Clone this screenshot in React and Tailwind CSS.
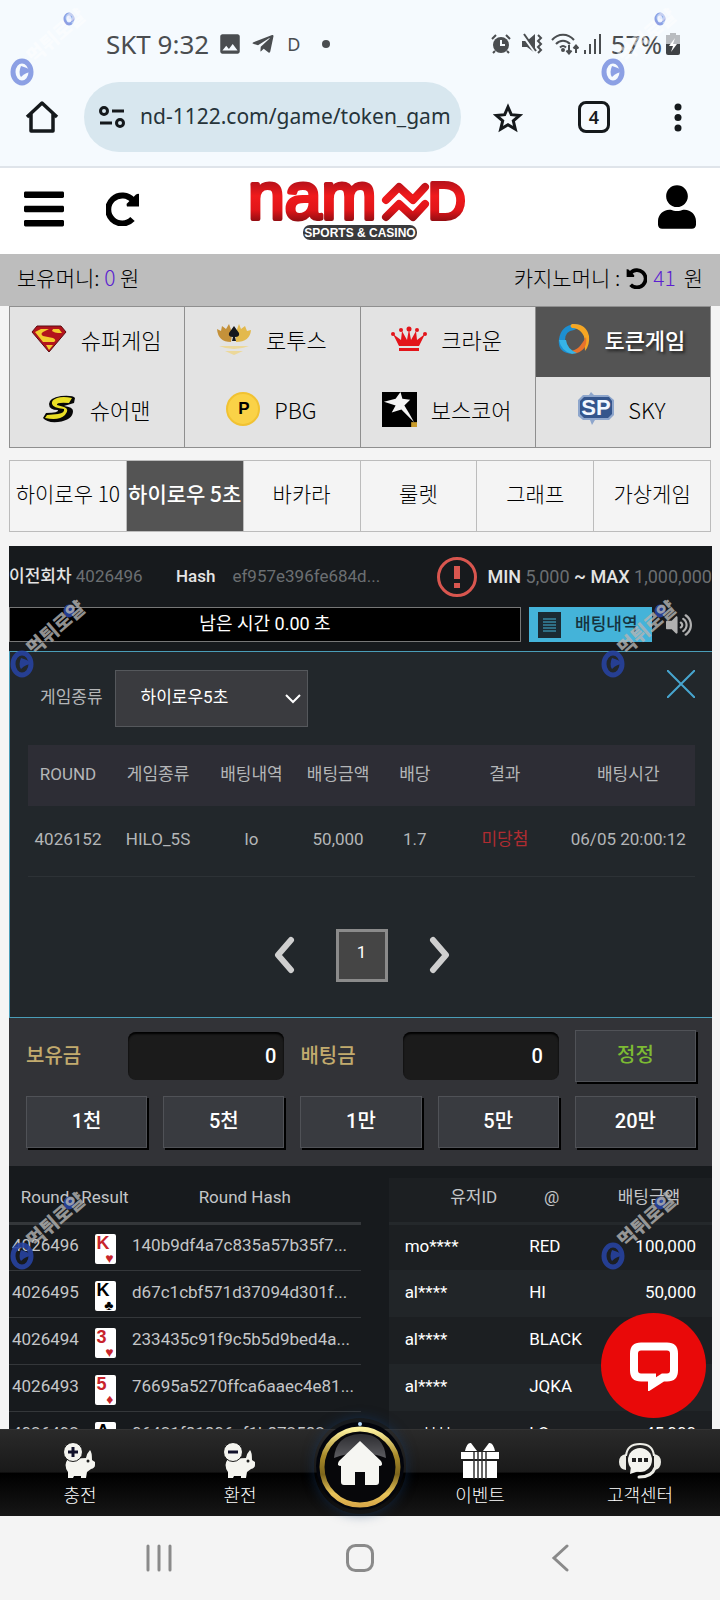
import { useState } from "react";
import { FaBars, FaUser, FaTelegramPlane, FaVolumeUp } from "react-icons/fa";
import { MdImage } from "react-icons/md";

const games = [
  { name: "슈퍼게임", icon: "super" },
  { name: "로투스", icon: "lotus" },
  { name: "크라운", icon: "crown" },
  { name: "토큰게임", icon: "token" },
  { name: "슈어맨", icon: "sureman" },
  { name: "PBG", icon: "pbg" },
  { name: "보스코어", icon: "star" },
  { name: "SKY", icon: "sky" },
];

const tabs = ["하이로우 10", "하이로우 5초", "바카라", "룰렛", "그래프", "가상게임"];

const chips = ["1천", "5천", "1만", "5만", "20만"];

const rounds = [
  { id: "4026496", rank: "K", suit: "♥", hash: "140b9df4a7c835a57b35f7..." },
  { id: "4026495", rank: "K", suit: "♣", hash: "d67c1cbf571d37094d301f..." },
  { id: "4026494", rank: "3", suit: "♥", hash: "233435c91f9c5b5d9bed4a..." },
  { id: "4026493", rank: "5", suit: "♦", hash: "76695a5270ffca6aaec4e81..." },
  { id: "4026492", rank: "A", suit: "♠", hash: "06421f81806ef1b872582..." },
];

const bets = [
  { user: "mo****", pick: "RED", amount: "100,000" },
  { user: "al****", pick: "HI", amount: "50,000" },
  { user: "al****", pick: "BLACK", amount: "" },
  { user: "al****", pick: "JQKA", amount: "" },
  { user: "su****", pick: "LO", amount: "45,000" },
];

const StatusBar = () => {
  return (
    <div className="flex h-[76px] items-center justify-between pl-[106px] pr-10 pt-3 font-['Noto_Sans',sans-serif] text-[26px] text-[#4a4d50]">
      <div className="flex items-center">
        <span>SKT 9:32</span>
        <MdImage className="ml-2 h-[26px] w-[26px]" />
        <FaTelegramPlane className="ml-2 h-6 w-6" />
        <span className="ml-3 text-lg">D</span>
        <span className="ml-[22px] h-2 w-2 rounded-full bg-[#4a4d50]" />
      </div>
      <div className="flex items-center">
        <svg viewBox="0 0 20 20" className="h-5 w-5">
          <circle cx="10" cy="11" r="8" fill="currentColor" />
          <path d="M1 5l4-4M19 5l-4-4M4 17l-2 2M16 17l2 2" stroke="currentColor" strokeWidth="2" />
          <path d="M10 6v5h4" fill="none" stroke="#f5fafe" strokeWidth="2" />
        </svg>
        <svg viewBox="0 0 22 22" className="ml-[10px] h-[22px] w-[22px]">
          <path d="M1 8h5l8-7v19l-8-6H1z" fill="currentColor" />
          <path d="M1 1l14 19" stroke="#f5fafe" strokeWidth="3" />
          <path d="M3 1l12 17M17 2l3 3-3 3 3 3-3 3 3 3-3 3" fill="none" stroke="currentColor" strokeWidth="2" />
        </svg>
        <svg viewBox="0 0 28 22" className="ml-2 h-[22px] w-7" fill="none" stroke="currentColor" strokeWidth="2">
          <path d="M1 7c6-7 16-7 22 0M5 11c4-4.500 10-4.500 14 0M9 14.500c2-2 4-2 6 0" />
          <circle cx="12" cy="17" r="1" />
          <path d="M18 12v8M15.500 17.500l2.500 3 2.500-3M25 20v-7M22.500 15.500l2.500-3 2.500 3" />
        </svg>
        <svg viewBox="0 0 20 22" className="ml-1 h-[22px] w-5" fill="currentColor">
          <path d="M1 17h2v4H1zM6 11h2v10H6zM11 6h2v15h-2zM16 1h2v20h-2z" />
        </svg>
        <span className="ml-2">57%</span>
        <svg viewBox="0 0 14 22" className="ml-1 h-[22px] w-[14px]">
          <path d="M4 0h6v2h4v9H0V2h4z" fill="#b9bcc0" />
          <path d="M0 11h14v9q0 2-2 2H2q-2 0-2-2z" fill="#3f4245" />
          <path d="M9 5l-6 8h4l-2 6 6-8H7z" fill="#fff" />
        </svg>
      </div>
    </div>
  );
};

const UrlBar = () => {
  return (
    <div className="flex h-[92px] items-start border-b-2 border-[#dfe4ea] pl-6 pr-[26px] pt-[6px] text-[#15191c]">
      <button type="button" aria-label="home" className="mt-[17px] h-9 w-9">
        <svg viewBox="0 0 36 36" fill="none" stroke="currentColor" strokeWidth="3.500" strokeLinejoin="round">
          <path d="M3 18L18 4l15 14M7 15v17h22V15" />
        </svg>
      </button>
      <div className="ml-6 flex h-[70px] min-w-0 flex-1 items-center rounded-full bg-[#d8e7ef] pl-[15px] pr-1">
        <svg viewBox="0 0 26 22" className="h-[22px] w-[26px] shrink-0" fill="none" stroke="currentColor" strokeWidth="3">
          <circle cx="5" cy="5" r="3.500" />
          <circle cx="21" cy="17" r="3.500" />
          <path d="M13 5h12M1 17h12" />
        </svg>
        <input
          aria-label="address"
          type="text"
          readOnly
          value="nd-1122.com/game/token_gam"
          className="ml-[15px] w-full bg-transparent font-['Noto_Sans',sans-serif] text-[21px] text-[#26343a] outline-none"
        />
      </div>
      <button type="button" aria-label="bookmark" className="ml-8 mt-[21px] h-[30px] w-[30px]">
        <svg viewBox="0 0 30 30" fill="none" stroke="currentColor" strokeWidth="3">
          <path d="M15 4l3.300 7.700 8.400.7-6.400 5.500 2 8.200-7.300-4.400-7.300 4.400 2-8.200-6.400-5.500 8.400-.7z" />
        </svg>
      </button>
      <button
        type="button"
        className="ml-[55px] mt-[19px] flex h-8 w-8 items-center justify-center rounded-lg border-3 border-[#15191c] font-['Noto_Sans',sans-serif] text-lg font-semibold"
      >
        4
      </button>
      <button type="button" aria-label="menu" className="ml-[52px] mt-[20px] h-8 w-8">
        <svg viewBox="0 0 32 32" fill="currentColor">
          <circle cx="16" cy="5" r="3.500" />
          <circle cx="16" cy="15.500" r="3.500" />
          <circle cx="16" cy="26" r="3.500" />
        </svg>
      </button>
    </div>
  );
};

const ReloadIcon = ({ className }) => (
  <svg viewBox="0 0 34 34" className={className}>
    <path d="M26.500 27A14 14 0 1 1 27 8.500" fill="none" stroke="currentColor" strokeWidth="6" />
    <path d="M33 2v12.500H21q-1-2 0-3l9-9q2-1 3-.5z" fill="currentColor" />
  </svg>
);

const Logo = () => {
  return (
    <svg viewBox="0 0 220 62" className="h-[62px] w-[220px]">
      <defs>
        <linearGradient id="logoRed" gradientUnits="userSpaceOnUse" x1="0" y1="2" x2="0" y2="42">
          <stop offset="0" stopColor="#b8121a" />
          <stop offset="0.350" stopColor="#f01a1c" />
          <stop offset="0.700" stopColor="#e01519" />
          <stop offset="1" stopColor="#8c0d12" />
        </linearGradient>
      </defs>
      <g fill="url(#logoRed)" stroke="url(#logoRed)" strokeWidth="4" strokeLinejoin="round" className="font-['Liberation_Sans',sans-serif]">
        <text x="-2" y="39" fontSize="66">nam</text>
        <text x="178" y="39" fontSize="52">D</text>
      </g>
      <g fill="none" stroke="url(#logoRed)" strokeWidth="8" strokeLinecap="round" strokeLinejoin="round">
        <path d="M136 20l13-13 14 13 12-13" />
        <path d="M136 37l13-13 14 13 12-13" />
      </g>
      <rect x="53" y="45" width="114" height="15" rx="7" fill="#3a3a3c" />
      <text x="110" y="57" fontSize="12" textAnchor="middle" fill="#fff" className="font-['Liberation_Sans',sans-serif] font-bold">
        SPORTS &amp; CASINO
      </text>
    </svg>
  );
};

const SiteHeader = () => {
  return (
    <header>
      <div className="flex h-[86px] items-center justify-between bg-white px-5 text-black">
        <div className="flex flex-1 items-center gap-[42px] pb-1">
          <button type="button" aria-label="menu" className="pl-1">
            <FaBars className="h-[46px] w-10" />
          </button>
          <button type="button" aria-label="reload">
            <ReloadIcon className="h-[34px] w-[34px]" />
          </button>
        </div>
        <a href="#" aria-label="NAMED">
          <Logo />
        </a>
        <div className="flex flex-1 justify-end">
          <button type="button" aria-label="my page" className="pb-2 pr-1">
            <FaUser className="h-11 w-[38px]" />
          </button>
        </div>
      </div>
      <div className="flex h-[52px] items-center justify-between bg-[#bdbdbd] px-[17px] pb-1 text-[21px] font-light text-black">
        <p>
          보유머니: <span className="text-[#5b1fd0]">0</span> 원
        </p>
        <p className="flex items-center">
          카지노머니 :
          <ReloadIcon className="mx-[6px] h-[21px] w-[21px] -scale-x-100" />
          <span className="mr-2 text-[#5b1fd0]">41</span>원
        </p>
      </div>
    </header>
  );
};

const GameIcon = ({ name }) => {
  switch (name) {
    case "super":
      return (
        <svg viewBox="0 0 36 28" className="h-7 w-9">
          <path d="M6 1h24l5 6-17 20L1 7z" fill="#b3141c" stroke="#5b0d12" />
          <path d="M10 4h8l-6 3q-3 2 0 4l10 2q4 2 1 4H12L4 7zM22 4h6l3 4h-4q-3 0-6-2zM15 20h7l-4 5z" fill="#f3cc2e" />
        </svg>
      );
    case "lotus":
      return (
        <svg viewBox="0 0 36 34" className="h-[34px] w-9">
          <path d="M15 20Q2 20 1 7l4 2 1-5 4 3 3-5q4 9 2 18z" fill="#c4913a" />
          <path d="M20 20Q34 20 35 8l-4 1-2-5-4 3-2-5q-4 9-3 18z" fill="#e3b94c" />
          <path d="M18 4l5 7q1 4-4 4l1 4h-4l1-4q-5 0-4-4z" fill="#15171c" />
          <path d="M3 24h30q-7 3-15 3T3 24zM9 29h18l-9 4z" fill="#ecd89a" />
        </svg>
      );
    case "crown":
      return (
        <svg viewBox="0 0 36 26" className="h-[26px] w-9" fill="#e3141a">
          <path d="M8 20L2 8l8 6 1-9 5 9 2-11 2 11 5-9 1 9 8-6-6 12zM8 22h20v3H8z" />
          <circle cx="2" cy="8" r="2" />
          <circle cx="10" cy="4" r="2" />
          <circle cx="18" cy="3" r="2.500" />
          <circle cx="26" cy="4" r="2" />
          <circle cx="34" cy="8" r="2" />
        </svg>
      );
    case "token":
      return (
        <svg viewBox="0 0 32 32" className="h-8 w-8">
          <path d="M16 1Q3 3 1 16t12 15q-6-5-6-14T16 7q4-3 10-2-4-4-10-4z" fill="#1d8fd1" />
          <path d="M14 1q14-1 17 12 1 9-4 15 0-4-1-5 2-8-2-13T14 5q-3-2 0-4z" fill="#f5a623" />
          <path d="M28 14q2 12-9 16-6 1-9-2 8 0 12-5t6-9z" fill="#e8722b" />
          <path d="M1 17q2 11 13 14l5-1q-10-4-11-13z" fill="#36b3e6" />
        </svg>
      );
    case "sureman":
      return (
        <svg viewBox="0 0 34 28" className="h-7 w-[34px]">
          <path d="M33 3q-2-3-14-2Q7 3 7 9t9 6q1 3-12 3l-3 5q4 5 15 4 15-2 15-11 0-4-9-5l10-3z" fill="#080808" />
          <path d="M30 3Q21 1 15 3 9 5 10 9t12 5q1 4-6 5l-11 1-2 3q14 3 20-3 5-6-1-8l-7-2q-1-3 12-2z" fill="#eadf25" />
        </svg>
      );
    case "pbg":
      return (
        <svg viewBox="0 0 34 34" className="h-[34px] w-[34px]">
          <circle cx="17" cy="17" r="16" fill="#fad247" stroke="#f1c232" strokeWidth="2" />
          <text x="18" y="22" fontSize="17" textAnchor="middle" className="font-['Liberation_Sans',sans-serif] font-bold">P</text>
        </svg>
      );
    case "star":
      return (
        <svg viewBox="0 0 36 36" className="h-[35px] w-[35px]">
          <rect width="36" height="36" fill="#000" />
          <path d="M19 0l2 7 8 1-6 6 5 8 5 9-10-10-3-3-10 3 4-7-12-4 12-3z" fill="#f4f4f4" />
          <path d="M30 31h6v5h-6z" fill="#c79a2a" />
        </svg>
      );
    default:
      return (
        <svg viewBox="0 0 36 34" className="h-[34px] w-9">
          <path d="M5 3h6l2-3 3 3h14l6 5v15l-5 5H17l-3 5-2-5H5l-5-4V8z" fill="#8ea6cc" />
          <path d="M6 5h25l3 4v13l-4 4H6l-4-4V9z" fill="#34558c" />
          <text x="18" y="23" fontSize="22" textAnchor="middle" fill="#f2f7ff" className="font-['Liberation_Sans',sans-serif] font-bold">SP</text>
        </svg>
      );
  }
};

const GameMenu = () => {
  const [game, setGame] = useState("토큰게임");

  return (
    <nav className="mx-[9px] grid grid-cols-4 border-b border-l border-t border-[#8f8f8f] bg-[#e3e3e3] text-[22px] font-light">
      {games.map((g) => (
        <button
          key={g.name}
          type="button"
          onClick={() => setGame(g.name)}
          className={`flex h-[70px] items-center justify-center gap-[14px] border-r border-[#8f8f8f] pb-[6px] pr-[2px] ${
            game === g.name ? "bg-[#545454] font-medium text-white [text-shadow:2px_2px_3px_#222]" : "text-black"
          }`}
        >
          <GameIcon name={g.icon} />
          <span>{g.name}</span>
        </button>
      ))}
    </nav>
  );
};

const TabMenu = () => {
  const [tab, setTab] = useState("하이로우 5초");

  return (
    <nav className="mx-[9px] mt-3 grid grid-cols-6 border-y border-l border-[#bcbcbc] text-[21px] font-light">
      {tabs.map((t) => (
        <button
          key={t}
          type="button"
          onClick={() => setTab(t)}
          className={`h-[70px] whitespace-nowrap border-r border-[#bcbcbc] pb-1 ${
            tab === t ? "bg-[#545454] font-medium text-white" : "text-black"
          }`}
        >
          {t}
        </button>
      ))}
    </nav>
  );
};

const InfoRow = () => {
  return (
    <div className="flex h-[61px] items-center justify-between whitespace-nowrap text-[#6b6f72]">
      <p>
        <b className="font-medium text-[#e4e4e4]">이전회차</b> 4026496
      </p>
      <p className="flex gap-[17px]">
        <b className="font-medium text-[#e4e4e4]">Hash</b>
        <span>ef957e396fe684d...</span>
      </p>
      <div className="ml-6 flex items-center gap-[10px]">
        <svg viewBox="0 0 40 40" className="h-10 w-10">
          <circle cx="20" cy="20" r="18.500" fill="none" stroke="#d9564f" strokeWidth="3" />
          <path d="M17 9h6v13h-6zM17 26h6v5h-6z" fill="#d9564f" />
        </svg>
        <p className="text-lg">
          <b className="font-medium text-[#e4e4e4]">MIN</b> 5,000 <b className="font-medium text-[#e4e4e4]">~ MAX</b> 1,000,000
        </p>
      </div>
    </div>
  );
};

const BetHistory = () => {
  return (
    <section className="h-[367px] border-y border-l border-[#4a9db8] bg-[#22272b] px-[18px] pr-[17px] text-[#b4b6b8]">
      <div className="flex items-start pt-[18px]">
        <label htmlFor="gameType" className="ml-3 mr-3 leading-[54px]">
          게임종류
        </label>
        <div className="relative">
          <select
            id="gameType"
            className="h-[57px] w-[193px] appearance-none border border-[#55585c] bg-[#3a3b3f] pb-[2px] pl-[25px] text-white outline-none"
          >
            <option>하이로우5초</option>
            <option>하이로우10초</option>
          </select>
          <svg viewBox="0 0 16 10" className="pointer-events-none absolute right-[7px] top-6 h-[10px] w-4">
            <path d="M1 1l7 7 7-7" fill="none" stroke="#fff" strokeWidth="2" />
          </svg>
        </div>
        <button type="button" aria-label="close" className="ml-auto">
          <svg viewBox="0 0 28 28" className="h-7 w-7">
            <path d="M0 0l28 28M28 0L0 28" stroke="#47a5cf" strokeWidth="2" />
          </svg>
        </button>
      </div>
      <table className="mt-[18px] w-full table-fixed text-center">
        <colgroup>
          <col className="w-[12%]" />
          <col className="w-[15%]" />
          <col className="w-[13%]" />
          <col className="w-[13%]" />
          <col className="w-[10%]" />
          <col className="w-[17%]" />
          <col className="w-[20%]" />
        </colgroup>
        <thead className="bg-[#2d2d35]">
          <tr className="h-[61px]">
            {["ROUND", "게임종류", "배팅내역", "배팅금액", "배당", "결과", "배팅시간"].map((h) => (
              <th key={h} className="pb-[2px] font-normal">
                {h}
              </th>
            ))}
          </tr>
        </thead>
        <tbody>
          <tr className="h-[70px] whitespace-nowrap border-b border-[#2d3236]">
            <td className="pb-[2px]">4026152</td>
            <td className="pb-[2px]">HILO_5S</td>
            <td className="pb-[2px]">lo</td>
            <td className="pb-[2px]">50,000</td>
            <td className="pb-[2px]">1.7</td>
            <td className="pb-[2px] text-[#b02c31]">미당첨</td>
            <td className="pb-[2px]">06/05 20:00:12</td>
          </tr>
        </tbody>
      </table>
      <div className="mt-[52px] flex items-center justify-center gap-10">
        <button type="button" aria-label="previous">
          <svg viewBox="0 0 24 38" className="h-[38px] w-6">
            <path d="M19 4L6 19l13 15" fill="none" stroke="#cfcfcf" strokeWidth="6" strokeLinecap="round" strokeLinejoin="round" />
          </svg>
        </button>
        <button type="button" className="h-[53px] w-[52px] border-3 border-[#8b8b8b] bg-[#454545] pb-1 text-white">
          1
        </button>
        <button type="button" aria-label="next">
          <svg viewBox="0 0 24 38" className="h-[38px] w-6">
            <path d="M5 4l13 15L5 34" fill="none" stroke="#cfcfcf" strokeWidth="6" strokeLinecap="round" strokeLinejoin="round" />
          </svg>
        </button>
      </div>
    </section>
  );
};

const chipStyle =
  "h-[52px] border border-[#505257] bg-[#393b40] pb-[2px] text-center shadow-[2px_2px_0_#000] font-medium";

const BetControls = () => {
  return (
    <section className="h-[148px] bg-[#323337] pl-[17px] pr-4 pt-[12px] text-xl font-medium">
      <div className="grid grid-cols-5 items-center gap-x-4">
        <div className="col-span-2 flex items-center justify-between">
          <label htmlFor="money" className="text-[#c2ab6e]">보유금</label>
          <input
            id="money"
            defaultValue="0"
            className="h-12 w-[156px] rounded-lg bg-[#1b1b1b] pr-2 text-right text-white shadow-[inset_0_2px_2px_#000] outline-none"
          />
        </div>
        <div className="col-span-2 flex items-center justify-between">
          <label htmlFor="betMoney" className="text-[#c2ab6e]">배팅금</label>
          <input
            id="betMoney"
            defaultValue="0"
            className="h-12 w-[156px] rounded-lg bg-[#1b1b1b] pr-4 text-right text-white shadow-[inset_0_2px_2px_#000] outline-none"
          />
        </div>
        <button type="button" className={`${chipStyle} text-[#7dbb33]`}>
          정정
        </button>
      </div>
      <div className="mt-[14px] grid grid-cols-5 gap-x-4 text-white">
        {chips.map((c) => (
          <button key={c} type="button" className={chipStyle}>
            {c}
          </button>
        ))}
      </div>
    </section>
  );
};

const Card = ({ rank, suit }) => {
  const red = suit === "♥" || suit === "♦";
  return (
    <span
      className={`mx-auto mt-1 flex h-[30px] w-[21px] flex-col justify-between rounded-[2px] bg-white px-[2px] font-['Liberation_Sans','DejaVu_Sans',sans-serif] font-bold ${
        red ? "text-[#c8242c]" : "text-black"
      }`}
    >
      <span className="text-left text-lg leading-[18px]">{rank}</span>
      <span className="text-right text-sm leading-[12px]">{suit}</span>
    </span>
  );
};

const RoundLists = () => {
  return (
    <section className="flex items-start justify-between pt-3">
      <table className="w-[50%] table-fixed text-[#c4c6c8]">
        <colgroup>
          <col className="w-[72px]" />
          <col className="w-12" />
          <col />
        </colgroup>
        <thead>
          <tr className="h-[45px] border-b-3 border-[#34373a]">
            <th className="pb-1 font-normal">Round</th>
            <th className="pb-1 font-normal">Result</th>
            <th className="pb-1 font-normal">Round Hash</th>
          </tr>
        </thead>
        <tbody>
          {rounds.map((r) => (
            <tr key={r.id} className="h-[47px] whitespace-nowrap border-b border-[#34373a]">
              <td className="pb-[2px] pl-[3px]">{r.id}</td>
              <td>
                <Card rank={r.rank} suit={r.suit} />
              </td>
              <td className="pb-[2px] pl-[3px]">{r.hash}</td>
            </tr>
          ))}
        </tbody>
      </table>
      <table className="w-[46%] table-fixed bg-[#1c1f22] text-white">
        <colgroup>
          <col className="w-[41%]" />
          <col className="w-[20%]" />
          <col className="w-[39%]" />
        </colgroup>
        <thead className="text-[#c4c6c8]">
          <tr className="h-[45px] border-b-3 border-[#24282b]">
            <th className="pb-1 pr-6 text-right font-normal">유저ID</th>
            <th className="pb-1 pr-1 font-normal">@</th>
            <th className="pb-1 font-normal">배팅금액</th>
          </tr>
        </thead>
        <tbody>
          {bets.map((b, i) => (
            <tr key={i} className="h-[47px] even:bg-[#212528]">
              <td className="pb-[2px] pl-4">{b.user}</td>
              <td className="whitespace-nowrap pb-[2px] pl-2">{b.pick}</td>
              <td className="pb-[2px] pr-4 text-right">{b.amount}</td>
            </tr>
          ))}
        </tbody>
      </table>
    </section>
  );
};

const GamePanel = () => {
  return (
    <div className="mx-[9px] mt-[14px] mr-2 bg-[#171a1d] font-[Roboto,'Noto_Sans_CJK_KR',sans-serif] text-[17px] font-normal">
      <InfoRow />
      <div className="flex items-center pb-[9px] pr-5">
        <div className="h-[35px] flex-1 border border-[#777] bg-black text-center text-lg leading-[32px] text-white">
          남은 시간 0.00 초
        </div>
        <button type="button" className="ml-2 flex h-[35px] w-[123px] items-center gap-[14px] bg-[#44b3d9] pl-[9px] text-[#16323d]">
          <svg viewBox="0 0 23 26" className="h-[26px] w-[23px]">
            <rect width="23" height="26" fill="#1b2a33" />
            <path d="M5 7h13M5 10h13M5 13h13M5 16h13M5 19h13" stroke="#44b3d9" />
          </svg>
          <span className="font-medium">배팅내역</span>
        </button>
        <button type="button" aria-label="sound" className="ml-[14px] text-[#b0b0b0]">
          <FaVolumeUp className="h-6 w-[26px]" />
        </button>
      </div>
      <BetHistory />
      <BetControls />
      <RoundLists />
    </div>
  );
};

const PigIcon = ({ minus }) => (
  <svg viewBox="0 0 34 38" className="h-[38px] w-[34px]">
    <path d="M5 17q-5 6 0 13v6h5l1-2h7v2h5l1-6 4-3q4-1 4-4v-3l-3-2q0-8-2-10-3 3-4 8z" fill="#f4f4ef" />
    <circle cx="10" cy="10" r="9.500" fill="#f4f4ef" stroke="#1a1a1a" />
    <path d={minus ? "M5 10h10" : "M5 10h10M10 5v10"} stroke="#11112a" strokeWidth="3" />
    <circle cx="25" cy="19" r="1.500" fill="#222" />
  </svg>
);

const GiftIcon = () => (
  <svg viewBox="0 0 40 38" className="h-[38px] w-10">
    <path d="M5 9q2-9 6-8l6 8zM35 9q-2-9-6-8l-6 8zM1 10h38v7H1zM3 19h34v17H3z" fill="#fff" />
    <path d="M14 10v27M18 10v27M22 10v27M26 10v27" stroke="#333" strokeWidth="1.500" />
  </svg>
);

const SupportIcon = () => (
  <svg viewBox="0 0 44 38" className="h-[38px] w-11">
    <path d="M8 14Q9 2 22 2t14 12" fill="none" stroke="#ecece6" strokeWidth="2" />
    <path d="M8 12q-7 1-7 8t7 8zM36 12q7 1 7 8t-7 8z" fill="#ecece6" />
    <circle cx="22" cy="18" r="12" fill="#f4f4ef" />
    <path d="M13 24l-1 8 9-3z" fill="#f4f4ef" />
    <path d="M37 26q-3 9-16 9" fill="none" stroke="#ecece6" strokeWidth="3" strokeLinecap="round" />
    <path d="M14 16h4v4h-4zM20 16h4v4h-4zM26 16h4v4h-4z" fill="#222" />
  </svg>
);

const HomeIcon = () => (
  <svg viewBox="0 0 92 96" className="h-24 w-[92px]">
    <defs>
      <linearGradient id="ringGold" x1="0" y1="0" x2="0" y2="1">
        <stop offset="0" stopColor="#fff3a0" />
        <stop offset="0.350" stopColor="#a88a2a" />
        <stop offset="0.600" stopColor="#7d651c" />
        <stop offset="0.850" stopColor="#e8c45a" />
        <stop offset="1" stopColor="#d9a94a" />
      </linearGradient>
      <linearGradient id="homeShine" x1="0" y1="0" x2="0" y2="1">
        <stop offset="0" stopColor="#2c2c30" />
        <stop offset="1" stopColor="#5c5c60" />
      </linearGradient>
    </defs>
    <circle cx="46" cy="48" r="44" fill="#03050c" />
    <circle cx="46" cy="49" r="38" fill="#07070a" stroke="url(#ringGold)" strokeWidth="5" />
    <path d="M20 40Q22 17 46 16t26 24q-26-10-52 0z" fill="url(#homeShine)" />
    <circle cx="46" cy="6" r="2" fill="#b6dcff" />
    <path d="M46 23l21 20q3 5-2 5v16q0 3-3 3H51V54H41v13H30q-3 0-3-3V48q-5 0-2-5z" fill="#f6f6f2" />
  </svg>
);

const navStyle = "flex flex-1 flex-col items-center pt-3";

const BottomNav = () => {
  return (
    <nav className="relative z-10 flex h-[87px] shrink-0 border-t border-[#333] bg-[linear-gradient(#2a2a2a,#191919_49%,#000_50%,#161616)] text-lg leading-6 text-white">
      <a href="#" className={navStyle}>
        <PigIcon />
        <span className="mt-[2px] font-light">충전</span>
      </a>
      <a href="#" className={navStyle}>
        <PigIcon minus />
        <span className="mt-[2px] font-light">환전</span>
      </a>
      <a href="#" aria-label="home" className="-mt-3 flex w-20 justify-center">
        <span className="-mx-2 h-24 w-[92px] shrink-0 rounded-full shadow-[0_0_12px_#14396b80]">
          <HomeIcon />
        </span>
      </a>
      <a href="#" className={navStyle}>
        <GiftIcon />
        <span className="mt-[2px] font-light">이벤트</span>
      </a>
      <a href="#" className={navStyle}>
        <SupportIcon />
        <span className="mt-[2px] font-light">고객센터</span>
      </a>
    </nav>
  );
};

const SystemNav = () => {
  return (
    <div className="flex h-[84px] shrink-0 items-center justify-around bg-[#f4f4f4] px-[58px] text-[#8a8a8a]">
      <button type="button" aria-label="recent apps">
        <svg viewBox="0 0 28 28" className="h-7 w-7" fill="none" stroke="currentColor" strokeWidth="3" strokeLinecap="round">
          <path d="M3 2v24M14 2v24M25 2v24" />
        </svg>
      </button>
      <button type="button" aria-label="home screen">
        <svg viewBox="0 0 28 28" className="h-7 w-7" fill="none" stroke="currentColor" strokeWidth="3">
          <rect x="1.500" y="1.500" width="25" height="25" rx="8" />
        </svg>
      </button>
      <button type="button" aria-label="back">
        <svg viewBox="0 0 28 28" className="h-7 w-7" fill="none" stroke="currentColor" strokeWidth="3" strokeLinecap="round">
          <path d="M20 2L7 14l13 12" />
        </svg>
      </button>
    </div>
  );
};

const Stamp = ({ className, light }) => (
  <svg viewBox="0 0 90 90" className={`pointer-events-none absolute z-20 h-[90px] w-[90px] ${className}`}>
    <g opacity={light ? 0.75 : 0.9}>
      <ellipse cx="22" cy="72" rx="9" ry="11" fill="none" stroke={light ? "#6a83dc" : "#27429f"} strokeWidth="5" />
      <path d="M21 66q8 2 11 6-6 0-11 5-3-4 0-11z" fill={light ? "#6a83dc" : "#27429f"} />
      <ellipse cx="69" cy="19" rx="4" ry="5" fill={light ? "#dfe6ff" : "#27429f"} stroke={light ? "#6a83dc" : "#27429f"} strokeWidth="3" />
    </g>
    <text
      x="34"
      y="64"
      fontSize="19"
      transform="rotate(-41 34 64)"
      fill={light ? "#ffffff" : "#b4b4b4"}
      opacity={light ? 0.5 : 0.8}
      className="font-['Noto_Sans_CJK_KR',sans-serif] font-black"
    >
      먹튀로얄
    </text>
  </svg>
);

const App = () => {
  return (
    <div className="relative flex h-screen flex-col overflow-hidden bg-[#f4f4f4] font-['Noto_Sans_CJK_KR',sans-serif]">
      <div className="shrink-0 bg-[#f5fafe]">
        <StatusBar />
        <UrlBar />
      </div>
      <main className="relative min-h-0 flex-1 overflow-hidden">
        <SiteHeader />
        <GameMenu />
        <TabMenu />
        <GamePanel />
        <button
          type="button"
          aria-label="chat"
          className="absolute bottom-[11px] right-[14px] flex h-[105px] w-[105px] items-center justify-center rounded-full bg-[#e90909]"
        >
          <svg viewBox="0 0 50 50" className="h-[50px] w-[50px]">
            <path d="M12 5.500h26q7 0 7 7v17q0 7-7 7h-4l-11 7v-7H12q-7 0-7-7v-17q0-7 7-7z" fill="none" stroke="#fff" strokeWidth="8" />
          </svg>
        </button>
      </main>
      <BottomNav />
      <SystemNav />
      <Stamp light className="left-0 top-0" />
      <Stamp light className="left-[591px] top-0" />
      <Stamp className="left-0 top-[592px]" />
      <Stamp className="left-[591px] top-[592px]" />
      <Stamp className="left-0 top-[1184px]" />
      <Stamp className="left-[591px] top-[1184px]" />
    </div>
  );
};

export default App;
